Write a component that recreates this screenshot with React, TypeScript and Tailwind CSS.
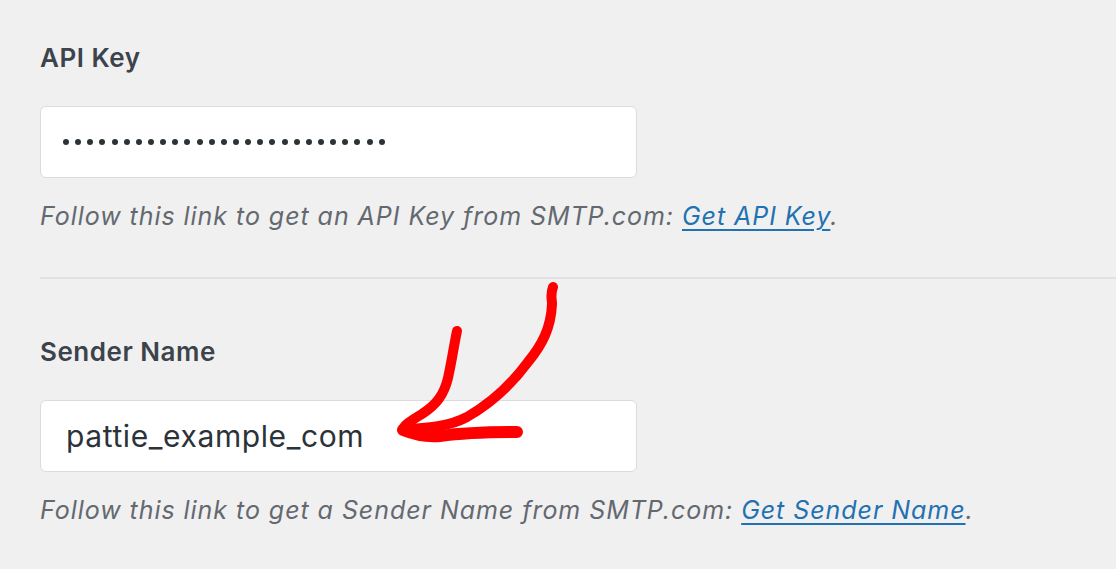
const font = { fontFamily: 'Inter, "Noto Sans", sans-serif' }

function Field({
  label,
  children,
  help,
  linkText,
}: {
  label: string
  children: React.ReactNode
  help: string
  linkText: string
}) {
  return (
    <div className="flex flex-col">
      <label className="h-8 text-[26px] leading-8 font-semibold tracking-[0.02em] text-[#3c434a]">{label}</label>
      <div className="mt-8 flex h-[72px] w-[597px] items-center rounded-md border border-[#dcdcde] bg-white">
        {children}
      </div>
      <p className="mt-[22px] h-8 text-[25px] leading-8 italic tracking-[0.038em] text-[#646970]">
        {help}{' '}
        <a href="#" className="text-[#2271b1] underline decoration-2 underline-offset-4">
          {linkText}
        </a>
        .
      </p>
    </div>
  )
}

export default function App() {
  return (
    <div className="relative min-h-screen overflow-hidden bg-[#f0f0f1]" style={font}>
      <div className="pt-[42px] pl-10">
        <Field
          label="API Key"
          help="Follow this link to get an API Key from SMTP.com:"
          linkText="Get API Key"
        >
          <div className="flex items-center gap-[6.15px] pl-[22px]">
            {Array.from({ length: 27 }).map((_, i) => (
              <span key={i} className="h-[6px] w-[6px] rounded-full bg-[#2c3338]" />
            ))}
          </div>
        </Field>

        <div className="mt-[45px] border-t-2 border-[#e2e2e3]" />

        <div className="mt-[57px]">
          <Field
            label="Sender Name"
            help="Follow this link to get a Sender Name from SMTP.com:"
            linkText="Get Sender Name"
          >
            <span className="pl-[25px] text-[30px] tracking-[0.02em] text-[#2c3338]">pattie_example_com</span>
          </Field>
        </div>
      </div>

      {/* red hand-drawn arrow */}
      <svg className="pointer-events-none absolute left-0 top-0" width="1116" height="569">
        <g fill="none" stroke="#ff0000" strokeLinecap="round" strokeLinejoin="round">
          <path d="M553 287 C550 295 552 299 552 304 C551 328 542 345 528 362 C511 385 490 404 467 417 C450 426 430 428 407 429" strokeWidth="10" />
          <path d="M457 331 C454 345 452 360 448 378 C444 395 436 405 422 414 C412 420 404 425 403 429" strokeWidth="10" />
          <path d="M403 430 C418 436 430 437 440 436 C462 433 490 432 517 432" strokeWidth="12" />
        </g>
      </svg>
    </div>
  )
}
